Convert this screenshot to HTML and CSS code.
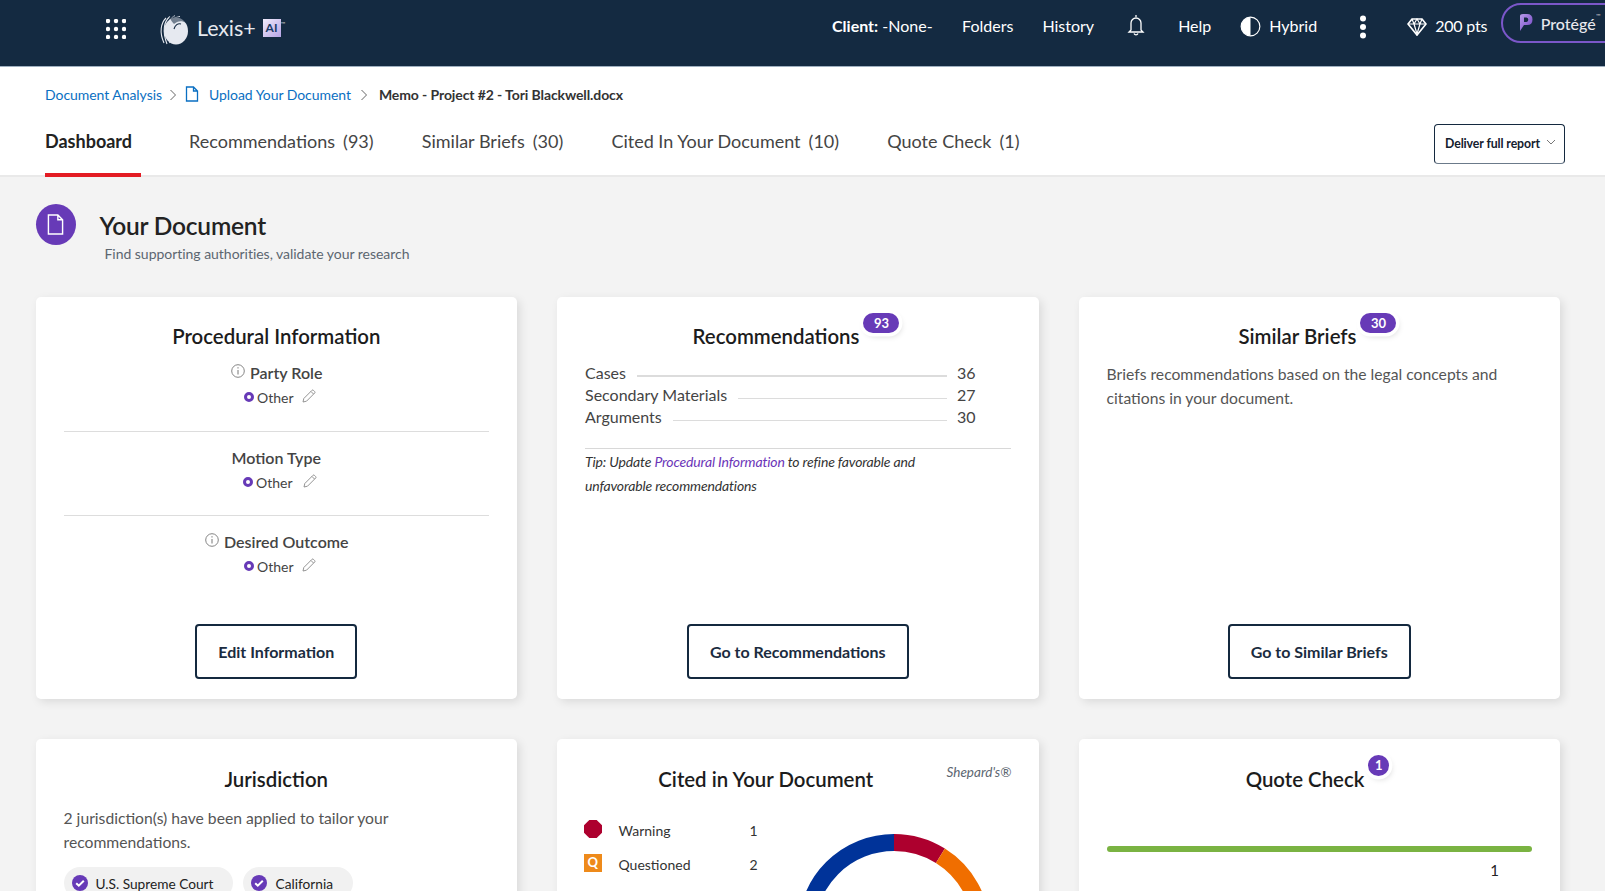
FILE: index.html
```html
<!DOCTYPE html>
<html lang="en">
<head>
<meta charset="utf-8">
<title>Lexis+ AI - Document Analysis</title>
<link rel="stylesheet" href="styles.css">
</head>
<body>
<header class="topbar">
  <svg class="grid-icon" viewBox="0 0 20 20" width="20" height="20"><g fill="#fff"><circle cx="2" cy="2" r="2.2"/><circle cx="10" cy="2" r="2.2"/><circle cx="18" cy="2" r="2.2"/><circle cx="2" cy="10" r="2.2"/><circle cx="10" cy="10" r="2.2"/><circle cx="18" cy="10" r="2.2"/><circle cx="2" cy="18" r="2.2"/><circle cx="10" cy="18" r="2.2"/><circle cx="18" cy="18" r="2.2"/></g></svg>
  <svg class="logo" viewBox="0 0 30 30" width="30" height="30">
    <ellipse cx="17" cy="16" rx="12" ry="13.5" fill="#e6e9f0"/>
    <g fill="none" stroke="#e6e9f0" stroke-width="1.1">
      <path d="M7 3C2 8 0 17 5 28"/><path d="M11 1.5C5 6 3 16 8 29"/><path d="M16 .8C9 4 6 14 11 28"/><path d="M21 1.5C14 2 8 8 8 16"/>
    </g>
    <path d="M10 2C16 0 24 1 27 8C23 5 18 6 15 9C13 7 12 5 10 2Z" fill="#142a41" opacity=".55"/>
    <path d="M22 9C19 8 16 10 15 14" stroke="#142a41" stroke-width="1.1" fill="none"/>
  </svg>
  <span class="brand">Lexis+</span>
  <span class="ai-box">AI</span>
  <sup class="tm">™</sup>
  <nav class="topnav">
    <span class="client"><b>Client:</b> -None-</span>
    <span class="nav-folders">Folders</span>
    <span class="nav-history">History</span>
    <svg class="bell" viewBox="0 0 18 22" width="18" height="22"><path d="M9 1v2M4 16V9a5 5 0 0 1 10 0v7l2 2H2zM7 19.5a2.2 2.2 0 0 0 4 0" fill="none" stroke="#fff" stroke-width="1.3"/></svg>
    <span class="nav-help">Help</span>
    <svg class="half" viewBox="0 0 22 22" width="21" height="21"><circle cx="11" cy="11" r="9.8" fill="none" stroke="#fff" stroke-width="1.2"/><path d="M11 1.2a9.8 9.8 0 0 0 0 19.6z" fill="#fff"/></svg>
    <span class="nav-hybrid">Hybrid</span>
    <svg class="kebab" viewBox="0 0 8 24" width="8" height="24"><g fill="#fff"><circle cx="4" cy="3.5" r="3"/><circle cx="4" cy="12" r="3"/><circle cx="4" cy="20.5" r="3"/></g></svg>
    <svg class="gem" viewBox="0 0 20 18" width="20" height="18"><path d="M5 1h10l4 5-9 11L1 6z" fill="none" stroke="#fff" stroke-width="1.7"/><path d="M1 6h18M7 6l3 10 3-10M5 1l2 5 3-5 3 5 2-5" fill="none" stroke="#fff" stroke-width="1.2"/></svg>
    <span class="pts">200 pts</span>
    <span class="protege">
      <svg viewBox="0 0 14 19" width="14" height="19"><defs><linearGradient id="pg" x1="0" y1="0" x2="1" y2="1"><stop offset="0" stop-color="#b79bea"/><stop offset="1" stop-color="#7445c4"/></linearGradient></defs><path d="M1 3Q1 1 4 1h4q5.500 0 5.500 5.500T8 12H5L1 18zM5 4.500V9h2.500a2.300 2.300 0 0 0 0-4.500z" fill="url(#pg)" fill-rule="evenodd"/></svg>
      <span class="protege-text">Protégé</span><sup class="tm2">™</sup>
    </span>
  </nav>
</header>

<section class="subhead">
  <div class="crumbs">
    <a class="crumb-link">Document Analysis</a>
    <svg class="crumb-chev" viewBox="0 0 8 12" width="8" height="12"><path d="M1.500 1l5 5-5 5" fill="none" stroke="#666" stroke-width="1"/></svg>
    <svg class="crumb-doc" viewBox="0 0 14 16" width="14" height="16"><path d="M1.500 1h7l4 4v10h-11zM8.500 1v4h4" fill="none" stroke="#0a6fc2" stroke-width="1.300"/></svg>
    <a class="crumb-link crumb-upload">Upload Your Document</a>
    <svg class="crumb-chev chev2" viewBox="0 0 8 12" width="8" height="12"><path d="M1.500 1l5 5-5 5" fill="none" stroke="#666" stroke-width="1"/></svg>
    <span class="crumb-now">Memo - Project #2 - Tori Blackwell.docx</span>
  </div>
  <div class="tabrow">
    <a class="tab active">Dashboard</a>
    <a class="tab">Recommendations<span class="tabcount">(93)</span></a>
    <a class="tab">Similar Briefs<span class="tabcount">(30)</span></a>
    <a class="tab">Cited In Your Document<span class="tabcount">(10)</span></a>
    <a class="tab">Quote Check<span class="tabcount">(1)</span></a>
    <button class="deliver"><span class="deliver-text">Deliver full report</span><svg viewBox="0 0 10 6" width="10" height="6"><path d="M1 1l4 4 4-4" fill="none" stroke="#777" stroke-width="1"/></svg></button>
  </div>
</section>

<main class="main">
  <div class="pagehead">
    <span class="docbadge"><svg viewBox="0 0 18 22" width="17" height="21"><path d="M1.500 1h10l5 5v15h-15zM11.500 1v5h5" fill="none" stroke="#fff" stroke-width="1.500"/></svg></span>
    <div class="pagehead-text">
      <h1>Your Document</h1>
      <p>Find supporting authorities, validate your research</p>
    </div>
  </div>

  <div class="cards">
    <article class="card">
      <div class="title-wrap"><h2>Procedural Information</h2></div>
      <div class="pi first">
        <div class="pi-label"><svg class="info" viewBox="0 0 14 14" width="14" height="14"><circle cx="7" cy="7" r="6.300" fill="none" stroke="#777" stroke-width=".9"/><path d="M7 6v4.500M7 3.200v1.300" stroke="#777" stroke-width="1"/></svg>Party Role</div>
        <div class="pi-val"><i class="dot"></i>Other<svg class="pencil" viewBox="0 0 14 14" width="14" height="14"><path d="M1 13l.8-3.500L10 1.300a1 1 0 0 1 1.400 0l1.300 1.300a1 1 0 0 1 0 1.400L4.500 12.200zM9 2.500l2.500 2.500" fill="none" stroke="#888" stroke-width=".9"/></svg></div>
      </div>
      <div class="pi">
        <div class="pi-label">Motion Type</div>
        <div class="pi-val wide"><i class="dot"></i>Other<svg class="pencil" viewBox="0 0 14 14" width="14" height="14"><path d="M1 13l.8-3.500L10 1.300a1 1 0 0 1 1.400 0l1.300 1.300a1 1 0 0 1 0 1.400L4.500 12.200zM9 2.500l2.500 2.500" fill="none" stroke="#888" stroke-width=".9"/></svg></div>
      </div>
      <div class="pi last">
        <div class="pi-label"><svg class="info" viewBox="0 0 14 14" width="14" height="14"><circle cx="7" cy="7" r="6.300" fill="none" stroke="#777" stroke-width=".9"/><path d="M7 6v4.500M7 3.200v1.300" stroke="#777" stroke-width="1"/></svg>Desired Outcome</div>
        <div class="pi-val"><i class="dot"></i>Other<svg class="pencil" viewBox="0 0 14 14" width="14" height="14"><path d="M1 13l.8-3.500L10 1.300a1 1 0 0 1 1.400 0l1.300 1.300a1 1 0 0 1 0 1.400L4.500 12.200zM9 2.500l2.500 2.500" fill="none" stroke="#888" stroke-width=".9"/></svg></div>
      </div>
      <a class="btn">Edit Information</a>
    </article>

    <article class="card">
      <div class="title-wrap"><h2>Recommendations</h2><span class="badge">93</span></div>
      <div class="recrows">
        <div class="recrow"><span>Cases</span><i class="leader"></i><span class="n">36</span></div>
        <div class="recrow"><span>Secondary Materials</span><i class="leader"></i><span class="n">27</span></div>
        <div class="recrow"><span>Arguments</span><i class="leader"></i><span class="n">30</span></div>
      </div>
      <p class="tip">Tip: Update <a>Procedural Information</a> to refine favorable and<br>unfavorable recommendations</p>
      <a class="btn">Go to Recommendations</a>
    </article>

    <article class="card">
      <div class="title-wrap"><h2>Similar Briefs</h2><span class="badge">30</span></div>
      <p class="desc">Briefs recommendations based on the legal concepts and citations in your document.</p>
      <a class="btn">Go to Similar Briefs</a>
    </article>

    <article class="card lower">
      <div class="title-wrap"><h2>Jurisdiction</h2></div>
      <p class="desc">2 jurisdiction(s) have been applied to tailor your recommendations.</p>
      <div class="chips">
        <span class="chip"><svg viewBox="0 0 16 16" width="16" height="16"><circle cx="8" cy="8" r="8" fill="#673ab7"/><path d="M4.200 8.200l2.600 2.500 5-5" fill="none" stroke="#fff" stroke-width="2"/></svg>U.S. Supreme Court</span>
        <span class="chip"><svg viewBox="0 0 16 16" width="16" height="16"><circle cx="8" cy="8" r="8" fill="#673ab7"/><path d="M4.200 8.200l2.600 2.500 5-5" fill="none" stroke="#fff" stroke-width="2"/></svg>California</span>
      </div>
    </article>

    <article class="card lower">
      <div class="cited-head"><h2>Cited in Your Document</h2><span class="shep">Shepard's®</span></div>
      <div class="cited-body">
        <div class="legend">
          <svg class="oct" viewBox="0 0 18 18" width="18" height="18"><path d="M5.300 0h7.400L18 5.300v7.400L12.700 18H5.300L0 12.700V5.300z" fill="#ad002e"/></svg>
          <span>Warning</span><span class="lnum">1</span>
          <span class="qbox">Q</span>
          <span>Questioned</span><span class="lnum">2</span>
        </div>
        <svg class="donut" viewBox="0 0 192 192" width="192" height="192">
          <g fill="none" stroke-width="17">
            <path d="M96 8.500A87.500 87.500 0 0 1 142.400 21.800" stroke="#ad002e"/>
            <path d="M142.400 21.800A87.500 87.500 0 0 1 183.500 96" stroke="#f06e00"/>
            <path d="M8.500 96A87.500 87.500 0 0 1 96 8.500" stroke="#003399"/>
          </g>
        </svg>
      </div>
    </article>

    <article class="card lower">
      <div class="title-wrap"><h2>Quote Check</h2><span class="badge round">1</span></div>
      <div class="qbar"></div>
      <div class="qnum">1</div>
    </article>
  </div>
</main>
</body>
</html>
```

FILE: styles.css
```css
* { box-sizing: border-box; }
html, body { margin: 0; height: 891px; overflow: hidden; }
body { font-family: "Lato", "Liberation Sans", sans-serif; background: #f3f3f3; color: #333; font-size: 16px; }
h1, h2, p { margin: 0; }

.topbar { height: 67px; background: #142a41; border-bottom: 1px solid #9fb0c0; display: flex; align-items: center; color: #fff; padding-left: 106px; overflow: hidden; }
.grid-icon { flex: none; margin-top: -9px; }
.logo { flex: none; margin: -6px 0 0 33px; }
.brand { font-size: 21.5px; font-weight: 400; color: #e6e9ef; margin: -10px 0 0 8px; letter-spacing: -.1px; }
.ai-box { flex: none; width: 18px; height: 18px; margin: -10px 0 0 7px; background: linear-gradient(135deg, #f1ecfb, #b7a4e6); color: #1a3a66; font-size: 12px; font-weight: 700; text-align: center; line-height: 18px; }
.tm { font-size: 6px; color: #ccc; margin: -20px 0 0 0; }
.topnav { display: flex; align-items: center; margin-left: 547px; flex: none; height: 66px; font-size: 16px; }
.topnav span, .topnav svg { flex: none; }
.client { margin-top: -15px; }
.client b { font-weight: 700; }
.nav-folders { margin: -15px 0 0 29.500px; }
.nav-history { margin: -15px 0 0 29px; }
.bell { margin: -17px 0 0 33px; }
.nav-help { margin: -15px 0 0 33px; }
.half { margin: -14px 0 0 29px; }
.nav-hybrid { margin: -15px 0 0 8px; }
.kebab { margin: -12px 0 0 42px; }
.gem { margin: -12px 0 0 40px; }
.pts { margin: -15px 0 0 8px; letter-spacing: -.2px; }
.protege { display: flex; align-items: center; height: 40px; width: 180px; margin: -21px 0 0 14px; padding-left: 15.500px; border: 2px solid #7b57c9; border-radius: 20px; }
.protege-text { font-size: 16px; font-weight: 500; color: #e8e8ee; margin-left: 8px; margin-top: 1px; }
.tm2 { font-size: 6px; color: #ccc; margin-top: -14px; }

.subhead { background: #fff; height: 110px; border-bottom: 2px solid #e9e9e9; padding: 17px 40px 0 45px; }
.crumbs { display: flex; align-items: center; height: 22px; font-size: 14px; line-height: 22px; }
.crumb-link { color: #0a6fc2; letter-spacing: -.05px; }
.crumb-chev { margin-left: 7px; }
.crumb-doc { margin: -3px 0 0 8px; }
.crumb-upload { margin-left: 10px; }
.chev2 { margin-left: 9px; }
.crumb-now { margin-left: 11px; color: #333; font-weight: 700; letter-spacing: -.1px; }

.tabrow { display: flex; align-items: flex-start; }
.tab { position: relative; padding: 21px 8px 20px 0; margin-right: 40.200px; font-size: 18px; line-height: 28px; color: #444; }
.tabcount { margin-left: 8px; }
.tab.active { color: #222; font-weight: 700; margin-right: 48px; padding-right: 9px; }
.tab.active::after { content: ""; position: absolute; left: 0; right: 0; bottom: -2px; height: 4px; background: #e31b23; }
.deliver { margin: 18px 0 0 auto; width: 131px; height: 40px; border: 1px solid #14293f; border-bottom-color: #6b7a8a; border-radius: 4px; background: #fff; color: #14202e; font-family: inherit; font-size: 12.300px; font-weight: 700; letter-spacing: -.1px; display: flex; align-items: center; padding: 0 0 0 10px; white-space: nowrap; }
.deliver-text { margin-top: -2px; }
.deliver svg { margin: -4px 0 0 6px; }

.main { padding: 27px 45px 0 35.500px; }
.pagehead { display: flex; align-items: flex-start; height: 93px; }
.docbadge { flex: none; width: 40px; height: 41px; border-radius: 50%; background: #673ab7; display: flex; align-items: center; justify-content: center; }
.pagehead-text { margin-left: 24px; padding-top: 6px; }
.pagehead-text h1 { font-size: 24.500px; line-height: 31px; font-weight: 600; color: #222; letter-spacing: -.2px; }
.pagehead-text p { font-size: 14px; line-height: 18px; margin: 4px 0 0 5px; color: #5c6670; letter-spacing: -.03px; }

.cards { display: grid; grid-template-columns: repeat(3, 1fr); gap: 40px; }
.card { height: 402px; background: #fff; border-radius: 5px; box-shadow: 3px 3px 10px rgba(0,0,0,.1); padding: 26px 28px 20px; display: flex; flex-direction: column; }
.card.lower { padding-top: 27px; }

.title-wrap { display: flex; justify-content: center; align-items: flex-start; height: 28px; }
h2 { font-size: 20.400px; line-height: 26px; font-weight: 600; color: #1c1c1c; white-space: nowrap; }
.badge { flex: none; width: 36px; height: 20px; margin: -10px 3.5px 0 4px; border-radius: 10px; background: #673ab7; color: #fff; font-size: 13px; font-weight: 700; text-align: center; line-height: 20px; box-shadow: 0 0 0 3.5px #fff, 2px 3px 6px rgba(0,0,0,.18); }
.badge.round { width: 21px; height: 21px; margin-top: -11px; border-radius: 50%; line-height: 21px; }

.pi { padding: 14px 0 22px; border-bottom: 1px solid #ddd; text-align: center; }
.pi.first { padding: 10px 0 23px; }
.pi.last { border-bottom: 0; }
.pi-label { display: flex; justify-content: center; align-items: center; height: 22px; font-size: 16px; font-weight: 600; color: #444; }
.info { margin: -2px 5px 0 1px; }
.pi-val { display: flex; justify-content: center; align-items: center; height: 22px; margin-top: 3px; padding-left: 7px; font-size: 14px; color: #444; }
.dot { width: 10px; height: 10px; border: 3px solid #673ab7; border-radius: 50%; margin-right: 3px; background: #fff; }
.pencil { margin: -3px 0 0 8px; }
.pi-val.wide .pencil { margin-left: 10px; }

.btn { margin: auto auto 0; height: 55px; padding: 0 21px; display: flex; align-items: center; border: 2px solid #14293f; border-radius: 4px; font-size: 16px; font-weight: 700; color: #1b2c40; white-space: nowrap; }

.recrows { margin-top: 10px; width: 390px; }
.recrow { display: flex; align-items: center; height: 22.300px; font-size: 16px; color: #444; }
.leader { flex: 1; height: 1.500px; background: #dcdcdc; margin: 8px 10px 0 11px; }
.n { width: 18px; }
.tip { margin-top: 20px; padding-top: 1px; border-top: 1px solid #d8d8d8; font-size: 14px; line-height: 24px; font-style: italic; color: #333; letter-spacing: -.15px; }
.tip a { color: #6b35b8; }

.desc { margin-top: 11px; font-size: 15.700px; line-height: 24px; color: #555; }
.lower .desc { margin-top: 12px; }

.chips { display: flex; gap: 10px; margin-top: 13px; }
.chip { display: flex; align-items: center; gap: 8px; height: 32px; border-radius: 16px; background: #f1f1f1; padding: 0 20px 0 8px; font-size: 13.700px; color: #222; }
.chip svg { flex: none; }

.cited-head { display: flex; align-items: flex-start; height: 28px; }
.cited-head h2 { flex: 1; text-align: center; }
.shep { font-size: 13.500px; font-style: italic; color: #5c6670; margin: -2px -1px 0 0; }
.cited-body { display: flex; align-items: flex-start; }
.legend { display: grid; grid-template-columns: 34.500px 131px 20px; grid-auto-rows: 33.5px; align-items: center; margin: 20px 0 0 -1px; font-size: 14px; color: #333; width: 214px; flex: none; }
.oct { margin-top: -3px; }
.qbox { width: 17.500px; height: 17.500px; margin-top: -3px; background: #ee8a1a; color: #fff; font-size: 13px; font-weight: 700; text-align: center; line-height: 17px; }
.donut { flex: none; margin-top: 40px; }

.qbar { height: 5.500px; margin-top: 52px; border-radius: 3px; background: #7ab342; }
.qnum { text-align: right; padding-right: 33px; margin-top: 8px; font-size: 15px; line-height: 20px; color: #222; }
```
